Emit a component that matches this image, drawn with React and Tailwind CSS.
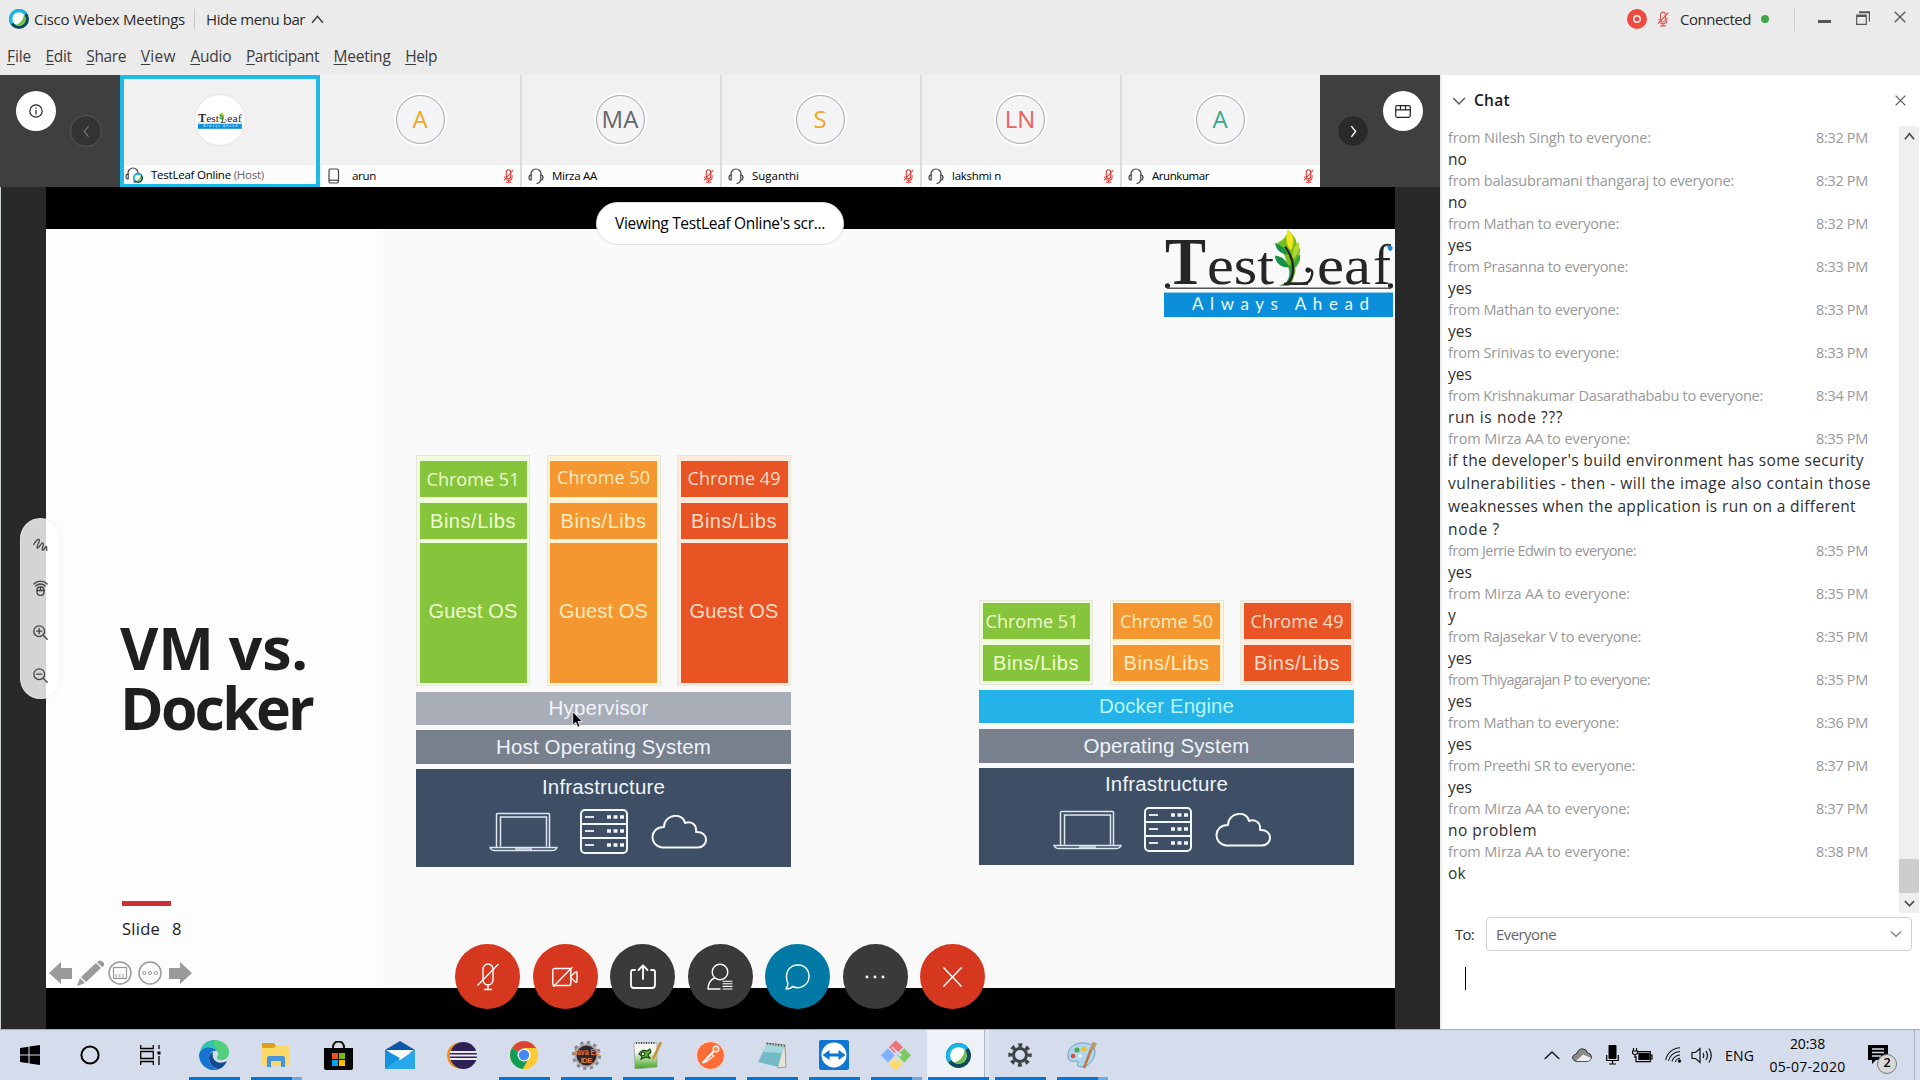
import React, { useLayoutEffect, useRef, useState } from "react";

const UI = "font-['Open_Sans','Noto_Sans',sans-serif]";
const HELV = "font-['Liberation_Sans',Arial,sans-serif]";

/* One line of text whose letter spacing is tuned so that it is `w` pixels wide. */
function Fit({ w, className = "", children }) {
  const ref = useRef(null);
  const [gap, setGap] = useState(0);
  useLayoutEffect(() => {
    const el = ref.current;
    const n = el.textContent.length;
    setGap((w - el.getBoundingClientRect().width) / n);
  }, [w]);
  return (
    <span ref={ref} className={`inline-block whitespace-pre ${className}`} style={{ letterSpacing: gap }}>
      {children}
    </span>
  );
}

/* ---------- shared glyphs ---------- */
function WebexLogo({ size = 20 }) {
  return (
    <svg width={size} height={size} viewBox="0 0 24 24">
      <circle cx="12" cy="12" r="12" fill="#0d4a5c" />
      <path d="M12 0A12 12 0 0 0 2 18.600L12 12 21.500 4.700A12 12 0 0 0 12 0Z" fill="#17b6e4" />
      <circle cx="12" cy="12" r="8" fill="#fff" />
      <path d="M17.800 6.500A8 8 0 0 1 8 18.900C14 17 17.500 12.500 17.800 6.500Z" fill="#6cc04a" />
    </svg>
  );
}
function MicOff({ w = 14, h = 18, color = "#e8534b", sw = 1.3 }) {
  return (
    <svg width={w} height={h} viewBox="0 0 14 18" fill="none" stroke={color} strokeWidth={sw} strokeLinecap="round">
      <rect x="4.200" y="1" width="5.600" height="11.500" rx="2.800" />
      <path d="M7 14.500V17M4 17h6M12.800 2 1.500 14" />
      <path d="M2.500 9.500v1M11.500 8v2.500c0 2-1.500 4-4.500 4-1 0-2-.300-2.800-.900" />
    </svg>
  );
}
function Headset() {
  return (
    <svg width="16" height="17" viewBox="0 0 16 17" fill="none" stroke="#444" strokeWidth="1.200">
      <path d="M3 7.500V6a5 5 0 0 1 10 0v1.500" />
      <path d="M3.200 7v5C1.800 12 1 11 1 9.500S1.800 7 3.200 7ZM12.800 7v5c1.400 0 2.200-1 2.200-2.500S14.200 7 12.800 7Z" />
      <path d="M12.500 12c0 2-1 3-4 3.500" />
    </svg>
  );
}
function Phone() {
  return (
    <svg width="12" height="16" viewBox="0 0 12 16" fill="none" stroke="#444" strokeWidth="1.200">
      <rect x="1" y="1" width="9.500" height="14" rx="1.500" />
      <path d="M1 12.200h9.500" />
    </svg>
  );
}
function Chevron({ dir, size = 12, color = "#555", sw = 1.4 }) {
  const d = { up: "M1 9 6 3l5 6", down: "M1 3.500 6 8.500l5-5", left: "M8 1 4 6l4 5", right: "M4 1l4 5-4 5" }[dir];
  return (
    <svg width={size} height={size} viewBox="0 0 12 12" fill="none" stroke={color} strokeWidth={sw}>
      <path d={d} />
    </svg>
  );
}
function Cross({ size = 12, color = "#555", sw = 1.3 }) {
  return (
    <svg width={size} height={size} viewBox="0 0 12 12" stroke={color} strokeWidth={sw}>
      <path d="M.7.7l10.600 10.600M11.300.7.7 11.300" />
    </svg>
  );
}

function TestLeafLogo({ width, height }) {
  return (
    <svg width={width} height={height} viewBox="0 0 230 90" preserveAspectRatio="none">
      <g fill="#262626" fontFamily="'Liberation Serif', serif">
        <text x="1" y="55" fontSize="69" fontWeight="700" textLength="41" lengthAdjust="spacingAndGlyphs">T</text>
        <text x="43" y="55" fontSize="56" textLength="67" lengthAdjust="spacingAndGlyphs">est</text>
        <text x="153" y="55" fontSize="56" textLength="54" lengthAdjust="spacingAndGlyphs">ea</text>
        <text x="209" y="55" fontSize="59" textLength="18" lengthAdjust="spacingAndGlyphs">f</text>
      </g>
      <path d="M128 56c-2-10-4-20-7-29-3-6-4-10-8-14 7-2 10-8 11-13 5 5 9 9 9 16 3 1 4 5 2 9 2 5 0 11-4 14 2 4-2 8-3 17Z" fill="#78be20" />
      <path d="M111 13c5 2 10 5 13 12-6 0-12-4-13-12ZM111 26c7 1 12 5 14 12-7 1-14-4-14-12Z" fill="#159447" />
      <path d="M124 0c6 5 7 12 3 21-5-5-6-14-3-21Z" fill="#f0e51c" />
      <path d="M135 12c1 8-1 13-6 17-1-7 1-13 6-17Z" fill="#b6d531" />
      <path d="M136 25c1 6-2 10-6 13-1-5 2-10 6-13Z" fill="#38a83c" />
      <path d="M124 36c3 4 2 12-2 18l-7 3h10c5-7 5-16 4-21Z" fill="#269b43" />
      <path d="M121 17c6 8 9 18 8 26-1 6-3 10-6 12h15c6 0 9-4 10-9 1-4-1-6-4-6" fill="none" stroke="#262626" strokeWidth="2.400" />
      <path d="M120 55h24" stroke="#262626" strokeWidth="2.500" />
      <circle cx="144" cy="41" r="2.600" fill="#262626" />
      <circle cx="3.500" cy="57" r="2.600" fill="#262626" />
      <circle cx="226.500" cy="57" r="2.600" fill="#262626" />
      <path d="M221 15.500q5-1 7.500 2 .5 3-2 4-3-.500-2.500-3.500Z" fill="#2388d8" />
      <path d="M3 59.500h224" stroke="#555" strokeWidth="1.500" />
      <rect x="0" y="64" width="229" height="25" fill="#0b8fdb" />
      <text x="28" y="82" fontSize="17" fill="#eefaff" fontFamily="Lato, sans-serif" textLength="177" lengthAdjust="spacing">Always Ahead</text>
    </svg>
  );
}

/* ---------- header ---------- */
const menus = [["File", 24], ["Edit", 26], ["Share", 40], ["View", 35], ["Audio", 41], ["Participant", 73], ["Meeting", 57], ["Help", 32]];

function Header() {
  return (
    <header className="h-[75px] bg-[#ebebeb] text-[#2b2b2b]">
      <div className="flex h-[38px] items-center pl-[9px]">
        <WebexLogo size={20} />
        <Fit w={151} className="ml-[5px] text-[15px]">Cisco Webex Meetings</Fit>
        <span className="ml-[9px] h-[20px] w-px bg-[#c8c8c8]" />
        <Fit w={99} className="ml-[11px] text-[15px]">Hide menu bar</Fit>
        <span className="ml-[6px]"><Chevron dir="up" size={13} color="#333" sw={1.2} /></span>
        <div className="ml-auto flex h-[37px] items-center">
          <svg width="20" height="20" viewBox="0 0 20 20"><circle cx="10" cy="10" r="10" fill="#f04a41" /><circle cx="10" cy="10" r="3.200" fill="none" stroke="#fff" strokeWidth="1.400" /></svg>
          <span className="ml-[10px]"><MicOff w={12} h={16} /></span>
          <Fit w={71} className="ml-[11px] text-[15px]">Connected</Fit>
          <span className="ml-[10px] size-[8px] rounded-full bg-[#3fa648]" />
          <span className="ml-[25px] h-[23px] w-px bg-[#cfcfcf]" />
          <span className="mt-[5px] ml-[23px] h-[3px] w-[13px] bg-[#555]" />
          <svg className="-mt-[2px] ml-[25px]" width="14" height="14" viewBox="0 0 14 14" fill="none" stroke="#555"><path d="M.7 5.500h9.600v7.800H.7z" strokeWidth="1.200" /><path d="M.2 4.500h10.600M3 1.200h11" strokeWidth="2" /><path d="M13.400 1v9.500" strokeWidth="1.200" /></svg>
          <span className="mt-[-5px] mr-[14px] ml-[24px]"><Cross size={12} /></span>
        </div>
      </div>
      <nav className="flex h-[37px] items-center gap-[14.600px] pl-[7px] text-[15.500px] text-[#3c3c3c]">
        {menus.map(([m, w]) => (
          <Fit key={m} w={w}><span className="underline decoration-1 underline-offset-[2px]">{m[0]}</span>{m.slice(1)}</Fit>
        ))}
      </nav>
    </header>
  );
}

/* ---------- participants strip ---------- */
const people = [
  { init: "A", color: "text-[#f0a726]", name: "arun", w: 24, phone: true },
  { init: "MA", color: "text-[#666]", name: "Mirza AA", w: 45 },
  { init: "S", color: "text-[#f0a726]", name: "Suganthi", w: 47 },
  { init: "LN", color: "text-[#ef6158]", name: "lakshmi n", w: 49 },
  { init: "A", color: "text-[#33ab8d]", name: "Arunkumar", w: 57 },
];

function Filmstrip() {
  return (
    <section className="flex h-[112px] bg-[#3f3f3f]">
      <div className="flex w-[120px] pl-[16px]">
        <span className="mt-[16px] flex size-[40px] items-center justify-center rounded-full bg-white">
          <svg width="14" height="14" viewBox="0 0 14 14" fill="none" stroke="#222" strokeWidth="1.200"><circle cx="7" cy="7" r="6.200" /><path d="M7 6v4.500M7 3.500v1.300" /></svg>
        </span>
        <span className="mt-[40px] ml-[14px] flex size-[32px] items-center justify-center rounded-full border border-[#575757] bg-[#333]"><Chevron dir="left" size={13} color="#777" sw={1.1} /></span>
      </div>
      <div className="flex w-[200px] flex-col border-4 border-b-[3px] border-[#1cbbe8] bg-[#f1f1f1]">
        <div className="flex flex-1 items-center justify-center">
          <span className="mt-[-4px] flex size-[52px] items-center justify-center rounded-full border border-[#e4e4e4] bg-white"><TestLeafLogo width={44} height={17} /></span>
        </div>
        <div className="flex h-[19px] items-center bg-[#fcfcfc] pt-[1px] pl-[1px] text-[11.500px] text-black">
          <span className="relative mr-[10px] w-[16px]"><Headset /><span className="absolute top-[6px] left-[8px]"><WebexLogo size={10} /></span></span>
          <Fit w={113}>TestLeaf Online <span className="text-[#666]">(Host)</span></Fit>
        </div>
      </div>
      {people.map((p, i) => (
        <div key={p.name} className={`flex w-[200px] flex-col bg-[#f1f1f1] ${i ? "border-l-2 border-[#dcdcdc]" : "pl-[2px]"}`}>
          <div className="flex h-[90px] items-center justify-center pr-[2px]">
            <span className="mt-[-2px] rounded-full border-2 border-white">
              <span className={`flex size-[49px] items-center justify-center rounded-full border border-[#a5a5a8] bg-[#f4f4f7] text-[24px] ${p.color}`}>{p.init}</span>
            </span>
          </div>
          <div className="flex flex-1 items-center bg-[#fcfcfc] pl-[5px] text-[11.500px] text-black">
            <span className="flex w-[25px] pl-[1px]">{p.phone ? <Phone /> : <Headset />}</span>
            <Fit w={p.w}>{p.name}</Fit>
            <span className="mr-[6px] ml-auto"><MicOff w={11} h={16} color="#e0312c" /></span>
          </div>
        </div>
      ))}
      <div className="flex flex-1 pl-[17px]">
        <span className="mt-[40px] flex size-[32px] items-center justify-center rounded-full border border-[#454545] bg-[#2a2a2a]"><Chevron dir="right" size={13} color="#fff" sw={1.3} /></span>
        <span className="mt-[16px] ml-[14px] flex size-[40px] items-center justify-center rounded-full bg-white">
          <svg width="16" height="13" viewBox="0 0 16 13" fill="none" stroke="#222" strokeWidth="1.200"><rect x=".7" y=".7" width="14.600" height="11.600" rx="1.500" /><path d="M.7 4.800h14.600M5.500.7v4M10.500.7v4" /></svg>
        </span>
      </div>
    </section>
  );
}

/* ---------- slide diagrams ---------- */
function Infra() {
  return (
    <div className="flex items-center pl-[73px]">
      <svg width="69" height="40" viewBox="0 0 69 40" fill="none" stroke="#dfe8f2"><path d="M7.500 35V2.500q0-1 1-1h51q1 0 1 1V35" strokeWidth="1.500" /><path d="M11.500 34.500V5h46v29.500" strokeWidth="1.500" /><path d="M1 35.500h67q-1 3-5 3H6q-4 0-5-3Z" strokeWidth="1.300" /><path d="M26 37h17" strokeWidth="1.500" /></svg>
      <svg className="ml-[22px]" width="48" height="45" viewBox="0 0 48 45" fill="none" stroke="#f3f6fa"><rect x="1" y="1" width="46" height="43" rx="4" strokeWidth="2" /><path d="M1 15h46M1 29h46" strokeWidth="2" />
        {[8, 22, 36].map((y) => <g key={y}><path d={`M5 ${y}h9`} strokeWidth="1.800" /><path d={`M27 ${y}h4M33.500 ${y}h4M40 ${y}h4`} strokeWidth="3.500" /></g>)}
      </svg>
      <svg className="ml-[23px]" width="56" height="34" viewBox="0 0 56 34" fill="none" stroke="#f3f6fa" strokeWidth="2"><path d="M11 32.500C-2 31-2 12 13 12 13 -1 32-3 34 8c6-2 12 1 11 9 13-1 13 15 2 15.500Z" strokeLinejoin="round" /></svg>
    </div>
  );
}

const hues = [
  { bg: "bg-[#86c43b]", frame: "bg-[#effbdc]", text: "text-[#efffd0]" },
  { bg: "bg-[#f59731]", frame: "bg-[#fff4d6]", text: "text-[#ffecc0]" },
  { bg: "bg-[#e85423]", frame: "bg-[#ffeade]", text: "text-[#ffdcc8]" },
];

function Column({ i, guest, offset = "" }) {
  const c = hues[i];
  const name = ["Chrome 51", "Chrome 50", "Chrome 49"][i];
  return (
    <div className={`w-[114px] border border-[#e6e6da] px-[2.500px] ${c.frame} ${c.text} ${guest ? "pt-[5px] pb-[2px]" : "pt-[2px] pb-[3px]"}`}>
      <div className={`flex h-[36px] items-center justify-center ${c.bg} ${offset}`}>
        <Fit w={93} className={`text-[18px] font-medium ${UI}`}>{name}</Fit>
      </div>
      <div className={`mt-[6px] flex h-[36px] items-center justify-center ${c.bg}`}>
        <Fit w={86} className={`text-[20px] ${HELV}`}>Bins/Libs</Fit>
      </div>
      {guest && (
        <div className={`mt-[4px] flex h-[140px] items-center justify-center pb-[4px] ${c.bg}`}>
          <Fit w={89} className={`text-[20px] ${HELV}`}>Guest OS</Fit>
        </div>
      )}
    </div>
  );
}

function Stack({ guest, bars }) {
  return (
    <div className={`w-[375px] text-[#eef4fb] ${HELV}`}>
      <div className={`flex justify-between ${guest ? "mb-[6px]" : "mb-[5px]"}`}>
        <Column i={0} guest={guest} offset={guest ? "pt-[1px]" : "pt-[1px] pr-[8px]"} />
        <Column i={1} guest={guest} offset={guest ? "pb-[4px]" : ""} />
        <Column i={2} guest={guest} offset={guest ? "pb-[2px]" : ""} />
      </div>
      {bars.map((b) => (
        <div key={b.label} className={`flex items-center justify-center ${b.bg} ${b.size}`}>
          <Fit w={b.w} className={`text-[20.500px] ${b.text || ""}`}>{b.label}</Fit>
        </div>
      ))}
      <div className={`bg-[#3e4e64] ${guest ? "h-[98px] pt-[2px]" : "h-[97px]"}`}>
        <div className="flex h-[32px] items-center justify-center"><Fit w={123} className="text-[20.500px]">Infrastructure</Fit></div>
        <div className={guest ? "mt-[6px]" : "mt-[7px] ml-[1px]"}><Infra /></div>
      </div>
    </div>
  );
}

function SlideNav() {
  const g = "#9a9a9a";
  return (
    <div className="flex items-center">
      <svg width="23" height="24" viewBox="0 0 23 24" fill={g}><path d="M0 12 12 1v6h11v11H12v5Z" /></svg>
      <svg className="ml-[5px]" width="27" height="26" viewBox="0 0 27 26" fill={g}><path d="M0 26 3 18l5 5ZM4 17 19 3l5 5L9 22ZM20 2q3-3 6 0t-1 5Z" /></svg>
      <svg className="ml-[4px]" width="24" height="24" viewBox="0 0 24 24" fill="none" stroke={g}><circle cx="12" cy="12" r="11" strokeWidth="1.500" /><rect x="5.500" y="6.500" width="13" height="11" strokeWidth="1.200" /><path d="M7 14h10M7 16h10" strokeDasharray="2 1.500" /></svg>
      <svg className="ml-[6px]" width="24" height="24" viewBox="0 0 24 24" fill="none" stroke={g}><circle cx="12" cy="12" r="11" strokeWidth="1.500" /><circle cx="6.300" cy="12" r="1.600" /><circle cx="12" cy="12" r="1.600" /><circle cx="17.700" cy="12" r="1.600" /></svg>
      <svg className="ml-[7px]" width="23" height="24" viewBox="0 0 23 24" fill={g}><path d="M23 12 11 1v6H0v11h11v5Z" /></svg>
    </div>
  );
}

function Slide() {
  return (
    <div className="flex h-[759px] overflow-hidden bg-[#f9f9f9]">
      <div className="flex w-[337px] flex-col bg-[#fdfdfd] pt-[388px]">
        <h1 className="ml-[74px] flex flex-col items-start text-[59px] leading-[60px] font-bold text-[#1f1f1f]">
          <Fit w={188}>VM vs.</Fit>
          <Fit w={192}>Docker</Fit>
        </h1>
        <div className="mt-[164px] ml-[76px] h-[5px] w-[49px] bg-[#cc2f35]" />
        <div className="mt-[11px] ml-[76px] flex h-[25px] items-center gap-[12px] text-[16.500px] font-medium text-[#222]"><Fit w={38}>Slide</Fit><span>8</span></div>
        <div className="mt-[18px] ml-[3px]"><SlideNav /></div>
      </div>
      <div className="relative flex flex-1 items-start pl-[33px]">
        <div className="absolute top-[1px] right-[1px]"><TestLeafLogo width={230} height={88} /></div>
        <div className="relative mt-[226px]">
          <Stack guest bars={[{ label: "Hypervisor", w: 100, bg: "bg-[#a9adb7]", size: "h-[33px] mb-[5px] pr-[10px]" }, { label: "Host Operating System", w: 215, bg: "bg-[#78808e]", size: "h-[34px] mb-[5px]" }]} />
          <svg className="absolute top-[256px] left-[156px]" width="11" height="17" viewBox="0 0 11 17"><path d="M.7.7v13.500l3-3 2.200 5 2.200-1-2.200-4.700h4.300Z" fill="#000" stroke="#fff" strokeWidth=".8" /></svg>
        </div>
        <div className="mt-[371px] ml-[188px]">
          <Stack bars={[{ label: "Docker Engine", w: 135, bg: "bg-[#24b3e8]", text: "text-[#b8f6ff]", size: "h-[33px] mb-[6px]" }, { label: "Operating System", w: 166, bg: "bg-[#78808e]", size: "h-[34px] mb-[5px]" }]} />
        </div>
      </div>
    </div>
  );
}

/* ---------- overlays on the shared screen ---------- */
function ToolPill() {
  const p = { fill: "none", stroke: "#444", strokeWidth: 1.3, strokeLinecap: "round" };
  return (
    <div className="absolute top-[331px] left-[20px] flex h-[181px] w-[41px] flex-col items-center justify-between rounded-full border border-[#eee]/70 bg-white/80 pt-[19px] pb-[15px]">
      <svg width="15" height="14" viewBox="0 0 15 14" {...p}><path d="M.7 6.500C2.500 3.500 5 .8 6.300 1.500S3 9 4.200 10 8.500 4.300 10 5s-1.800 6-.5 7 2.500-4 3.800-3.500-.8 3 .7 4" /></svg>
      <svg width="15" height="16" viewBox="0 0 15 16" {...p}><rect x="4" y="7" width="7" height="8.300" rx="3" /><path d="M4 10.500h7M7.500 7v3.500M.8 4C4.500.2 10.500.2 14.200 4M2.800 6c2.600-2.700 6.800-2.700 9.400 0" /></svg>
      <svg width="15" height="15" viewBox="0 0 15 15" {...p}><circle cx="6.200" cy="6.200" r="5.400" /><path d="m10.200 10.200 4 4M3.700 6.200h5M6.200 3.700v5" /></svg>
      <svg width="15" height="15" viewBox="0 0 15 15" {...p}><circle cx="6.200" cy="6.200" r="5.400" /><path d="m10.200 10.200 4 4M3.700 6.200h5" /></svg>
    </div>
  );
}

function Controls() {
  const s = { fill: "none", stroke: "#fff", strokeWidth: 1.4, strokeLinecap: "round", strokeLinejoin: "round" };
  const items = [
    ["bg-[#d5381e]", <svg width="22" height="28" viewBox="0 0 22 28" {...s}><rect x="6" y="1" width="10" height="21" rx="5" /><path d="M11 22v4M7.500 26.500h7M21 1.500 1 22" /></svg>],
    ["bg-[#d5381e]", <svg width="26" height="20" viewBox="0 0 26 20" {...s}><rect x=".8" y="1.500" width="18" height="17" rx="1.500" /><path d="m19 9 4.500-4q1.300-.8 1.500.5v9q-.2 1.300-1.500.5L19 11M20 .5 1.500 19.500" /></svg>],
    ["bg-[#3a3a3a]", <svg width="26" height="25" viewBox="0 0 26 25" {...s} strokeWidth="1.800"><path d="M5 6H3Q1 6 1 8v13q0 3 3 3h18q3 0 3-3V8q0-2-2-2h-2" /><path d="M13 15V2M8.500 6 13 1.500 17.500 6" /></svg>],
    ["bg-[#3a3a3a]", <svg width="26" height="27" viewBox="0 0 26 27" {...s}><circle cx="13" cy="9" r="7.800" /><path d="M7.500 15C3 17 1.300 20 1 26h12" /><path d="M16 18.200h9M16 20.800h9M16 23.400h9M16 26h9" strokeWidth="1.100" /></svg>],
    ["bg-[#0079a4]", <svg width="25" height="26" viewBox="0 0 25 26" {...s}><path d="M1 25c1.500-2 2-4 1.800-6C-1 9 4 1 13 1s11.500 8 11 12c-.6 8-9 13-16.500 9.500C5.500 25 3.500 25 1 25Z" /></svg>],
    ["bg-[#3a3a3a]", <svg width="20" height="4" viewBox="0 0 20 4" fill="#fff"><circle cx="2" cy="2" r="1.400" /><circle cx="10" cy="2" r="1.400" /><circle cx="18" cy="2" r="1.400" /></svg>],
    ["bg-[#d5381e]", <svg width="19" height="20" viewBox="0 0 19 20" {...s}><path d="m.7.7 17.600 18.600M18.300.7.7 19.300" /></svg>],
  ];
  return (
    <div className="absolute top-[757px] left-[455px] flex gap-[12.500px]">
      {items.map(([bg, icon], i) => <span key={i} className={`flex size-[65px] items-center justify-center rounded-full ${bg}`}>{icon}</span>)}
    </div>
  );
}

function Stage() {
  return (
    <section className="relative flex h-[842px] bg-[#292929]">
      <div className="w-[46px] border-l border-[#c8d0d0]" />
      <div className="w-[1349px] bg-black pt-[42px]"><Slide /></div>
      <div className="flex-1" />
      <div className="absolute top-[15px] left-[596px] flex h-[43px] w-[248px] items-center justify-center rounded-full border border-[#ddd] bg-white pt-[1px] text-[15.500px] text-black"><Fit w={210}>Viewing TestLeaf Online's scr...</Fit></div>
      <ToolPill />
      <Controls />
    </section>
  );
}

/* ---------- chat ---------- */
const chat = [
  ["Nilesh Singh", 203, "8:32 PM", ["no"]],
  ["balasubramani thangaraj", 286, "8:32 PM", ["no"]],
  ["Mathan", 171, "8:32 PM", ["yes"]],
  ["Prasanna", 180, "8:33 PM", ["yes"]],
  ["Mathan", 171, "8:33 PM", ["yes"]],
  ["Srinivas", 171, "8:33 PM", ["yes"]],
  ["Krishnakumar Dasarathababu", 315, "8:34 PM", ["run is node ???"]],
  ["Mirza AA", 182, "8:35 PM", ["if the developer's build environment has some security", "vulnerabilities - then - will the image also contain those", "weaknesses when the application is run on a different", "node ?"]],
  ["Jerrie Edwin", 188, "8:35 PM", ["yes"]],
  ["Mirza AA", 182, "8:35 PM", ["y"]],
  ["Rajasekar V", 193, "8:35 PM", ["yes"]],
  ["Thiyagarajan P", 202, "8:35 PM", ["yes"]],
  ["Mathan", 171, "8:36 PM", ["yes"]],
  ["Preethi SR", 187, "8:37 PM", ["yes"]],
  ["Mirza AA", 182, "8:37 PM", ["no problem"]],
  ["Mirza AA", 182, "8:38 PM", ["ok"]],
];
const lineWidths = {
  "run is node ???": 115,
  "if the developer's build environment has some security": 416,
  "vulnerabilities - then - will the image also contain those": 423,
  "weaknesses when the application is run on a different": 408,
  "node ?": 52, "no problem": 89, no: 19, yes: 24, ok: 18, y: 8,
};

function Chat() {
  return (
    <aside className="flex w-[480px] flex-col border-l-2 border-[#ededed] bg-white">
      <div className="flex h-[51px] items-center pr-[14px] pl-[10px]">
        <Chevron dir="down" size={14} color="#555" sw={1.2} />
        <Fit w={36} className="ml-[8px] text-[15.500px] font-semibold text-[#1b1b1b]">Chat</Fit>
        <span className="ml-auto"><Cross size={11} /></span>
      </div>
      <div className="flex h-[787px]">
        <div className="flex-1 pt-[2px] pl-[6px]">
          {chat.map(([who, w, time, lines], i) => (
            <div key={i}>
              <div className="flex h-[20px] items-center justify-between pr-[31px] text-[14.500px] text-[#999]">
                <Fit w={w}>{`from ${who} to everyone:`}</Fit>
                <Fit w={52}>{time}</Fit>
              </div>
              {lines.map((l) => <div key={l} className="flex h-[23px] items-center text-[15.500px] text-[#2f2f2f]"><Fit w={lineWidths[l]}>{l}</Fit></div>)}
            </div>
          ))}
        </div>
        <div className="mr-px flex w-[20px] flex-col items-center bg-[#efefef]">
          <span className="mt-[5px]"><Chevron dir="up" size={11} color="#505050" sw={2} /></span>
          <span className="mt-auto h-[34px] w-full bg-[#cdcdcd]" />
          <span className="flex h-[20px] items-center"><Chevron dir="down" size={11} color="#505050" sw={2} /></span>
        </div>
      </div>
      <div className="mt-[4px] flex items-center pl-[13px] text-[15px] text-[#333]">
        <Fit w={19}>To:</Fit>
        <div className="ml-[12px] flex h-[34px] w-[426px] items-center justify-between rounded-[4px] border border-[#d0d0d0] pr-[9px] pl-[9px] text-[#666]"><Fit w={60}>Everyone</Fit><Chevron dir="down" size={12} color="#777" sw={1.2} /></div>
      </div>
      <span className="mt-[16px] ml-[23px] h-[23px] w-px bg-black" />
    </aside>
  );
}

/* ---------- taskbar ---------- */
const apps = [
  { bar: "w-[51px]", icon: <svg width="30" height="30" viewBox="0 0 30 30"><path d="M1 14C1 5 8 0 15 0c8 0 15 5 15 12 0 5-4 8-8 8-3 0-4-1-4-2 0-2 2-2 1-5-2-6-13-8-18 1Z" fill="#35c1b0" /><path d="M15 0c8 0 15 5 15 12 0 5-4 8-8 8-3 0-4-1-4-2 2-4 1-9-3-12Z" fill="#5bd36b" opacity=".75" /><path d="M0 15c1-8 13-10 18-4-5-1-8 3-8 7 0 6 5 11 11 12C10 33 0 25 0 15Z" fill="#1673cf" /><path d="M10 18c0-3 1-5 4-6-2 7 4 14 14 9-2 4-5 8-9 8-5-1-9-6-9-11Z" fill="#114a93" /></svg> },
  { bar: "w-[51px]", split: true, icon: <svg width="28" height="24" viewBox="0 0 28 24"><path d="M0 1q0-1 1-1h10l3 3h12q1 0 1 1v18H0Z" fill="#f6c445" /><path d="M0 0h12l2 3-3 2H0Z" fill="#dba01c" /><path d="M0 5h12l2-2h13v20H0Z" fill="#fbd868" /><path d="M5 24V15q0-2 2-2h14q2 0 2 2v9h-4v-6H9v6Z" fill="#4796dc" /></svg> },
  { icon: <svg width="29" height="29" viewBox="0 0 29 29"><path d="M9 10V6a5.500 5.500 0 0 1 11 0v4" fill="none" stroke="#111" strokeWidth="2" /><path d="M0 7h29v20q0 2-2 2H2q-2 0-2-2Z" fill="#050505" /><path d="M8 12h6v6H8z" fill="#f25022" /><path d="M15 12h6v6h-6z" fill="#7fba00" /><path d="M8 19h6v6H8z" fill="#00a4ef" /><path d="M15 19h6v6h-6z" fill="#ffb900" /></svg> },
  { icon: <svg width="30" height="28" viewBox="0 0 30 28"><path d="M0 9 15 0l15 9v3H0Z" fill="#0a57a5" /><path d="M0 9v19h30V9L15 19Z" fill="#28a8ea" /><path d="M1 9h28L15 19Z" fill="#f8f8f8" /><path d="M0 28 15 17 0 9Z" fill="#1490df" /></svg> },
  { icon: <svg width="30" height="27" viewBox="0 0 30 27"><ellipse cx="13" cy="13.500" rx="13" ry="13" fill="#f28c1c" /><circle cx="16.500" cy="13.500" r="13.500" fill="#2c2255" /><path d="M3 10h27M3 13.500h27M3 17h27" stroke="#eceaf4" strokeWidth="1.900" /></svg> },
  { bar: "w-[51px]", icon: <svg width="28" height="28" viewBox="0 0 28 28"><circle cx="14" cy="14" r="14" fill="#fbc92f" /><path d="M14 14 1.900 7A14 14 0 0 1 26.100 7Z" fill="#db4437" /><path d="M1.900 7A14 14 0 0 0 13 28l6-11-5-3Z" fill="#109d58" /><path d="M26.100 7H14v7l5 3-6 11A14 14 0 0 0 26.100 7Z" fill="#fdca35" /><circle cx="14" cy="14" r="6.500" fill="#fff" /><circle cx="14" cy="14" r="5.200" fill="#4789f4" /></svg> },
  { bar: "w-[51px]", icon: <svg width="29" height="29" viewBox="0 0 29 29"><circle cx="14.500" cy="14.500" r="12.800" fill="none" stroke="#84858c" strokeWidth="3.400" strokeDasharray="3.200 3.500" /><circle cx="14.500" cy="14.500" r="11" fill="#2c2730" stroke="#aaa" strokeWidth="2" /><text x="1" y="13.500" fontSize="8.500" fontWeight="700" fill="#e47b2c" fontFamily="Liberation Sans, sans-serif" textLength="27" lengthAdjust="spacingAndGlyphs">Java EE</text><text x="8.500" y="21.500" fontSize="8" fontWeight="700" fill="#e47b2c" fontFamily="Liberation Sans, sans-serif" textLength="12">IDE</text></svg> },
  { bar: "w-[51px]", icon: <svg width="30" height="28" viewBox="0 0 30 28"><defs><linearGradient id="sheet" x1="0" y1="0" x2="0" y2="1"><stop offset=".35" stopColor="#f4f6f0" /><stop offset="1" stopColor="#3fa51a" /></linearGradient></defs><path d="M1 2h23v24L2 28Z" fill="url(#sheet)" stroke="#999" strokeWidth=".7" /><path d="M3 2h20" stroke="#444" strokeDasharray="1 1.500" strokeWidth="2" /><path d="M6 13q3-5 8-3l3-2 1 3-3 3 2 3-4-1-5 2 1-3Z" fill="#5eb62b" stroke="#173d16" strokeWidth="1.100" /><circle cx="10" cy="13" r="1.800" fill="#e2f3c8" stroke="#173d16" /><path d="m28 1-8 17" stroke="#c99030" strokeWidth="2.600" /></svg> },
  { bar: "w-[51px]", icon: <svg width="29" height="29" viewBox="0 0 29 29"><circle cx="14.500" cy="14.500" r="14" fill="#ff6c37" stroke="#ffe1d5" /><path d="m7 22 9-10 3-3" stroke="#fff" strokeWidth="2" /><path d="m7 21 8-8 3 2-8 6Z" fill="none" stroke="#fff" strokeWidth="1.100" /><circle cx="20" cy="8" r="2.800" fill="#ff8a5e" stroke="#fff" strokeWidth="1.200" /></svg> },
  { bar: "w-[51px]", icon: <svg width="29" height="27" viewBox="0 0 29 27"><path d="m8 1 19 2 1 22-8 1Z" fill="#e6e3d4" stroke="#8b8570" strokeWidth=".8" /><path d="M9 2 26 4 20 25 0 20Z" fill="#75b9c5" /><path d="M9 2 26 4l-2 7L5 10Z" fill="#a5d8dd" /><path d="M9 1.500 27 4" stroke="#535d60" strokeWidth="2" strokeDasharray="1.200 1.600" /></svg> },
  { bar: "w-[51px]", icon: <svg width="30" height="30" viewBox="0 0 30 30"><rect width="30" height="30" rx="2" fill="#0d77d1" /><circle cx="15" cy="15" r="12.500" fill="#fff" /><path d="m3.500 15 7-5v3.500h9V10l7 5-7 5v-3.500h-9V20Z" fill="#0d77d1" /></svg> },
  { bar: "w-[51px]", split: true, icon: <svg width="30" height="30" viewBox="0 0 30 30"><g transform="rotate(45 15 15)"><rect x="4.500" y="4.500" width="10" height="10" fill="#f07177" /><rect x="16" y="4.500" width="10" height="10" fill="#7ccb5e" /><rect x="4.500" y="16" width="10" height="10" fill="#7eb0ff" /><rect x="16" y="16" width="10" height="10" fill="#ffdb6b" /></g><path d="m11 7 8 8M15 11v9" stroke="#d5dcec" strokeWidth="1.600" /><circle cx="15" cy="20" r="1.800" fill="#d5dcec" /><circle cx="19" cy="15" r="1.800" fill="#d5dcec" /></svg> },
  { bar: "w-[61px]", active: true, icon: <WebexLogo size={25} /> },
  { bar: "w-[51px]", icon: <svg width="24" height="24" viewBox="0 0 24 24" fill="none" stroke="#3f434b"><circle cx="12" cy="12" r="6.500" strokeWidth="3" /><circle cx="12" cy="12" r="9.700" strokeWidth="4" strokeDasharray="3.800 3.818" strokeDashoffset="1.900" /></svg> },
  { bar: "w-[51px]", split: true, icon: <svg width="31" height="28" viewBox="0 0 31 28"><path d="M1 16C0 7 8 1 17 2c9 0 13 7 10 14-3 8-12 12-16 9-2-2 2-4-1-5-3 0-8 2-9-4Z" fill="#aed6ed" stroke="#6b9fbd" /><circle cx="6" cy="15" r="2.300" fill="#dc4a42" /><circle cx="10" cy="9" r="2.500" fill="#48ac48" /><circle cx="17" cy="8" r="2.500" fill="#f3ba2b" /><circle cx="13" cy="15" r="1.800" fill="#f5f9fc" /><path d="m17 27 8-21" stroke="#bf7840" strokeWidth="2.600" /><path d="m23 9 2-8 5 1-3 7Z" fill="#b79a70" /></svg> },
];

function Taskbar() {
  return (
    <footer className="flex h-[51px] border-t border-[#a9adb3] bg-[#d5dded] text-black">
      <div className="flex w-[183px] items-center">
        <span className="flex w-[60px] justify-center"><svg width="20" height="20" viewBox="0 0 20 20"><path d="M0 3 8.500 1.700v7.800H0ZM9.500 1.500 20 0v9.500H9.500ZM0 10.500h8.500v7.800L0 17ZM9.500 10.500H20V20L9.500 18.500Z" /></svg></span>
        <span className="flex w-[60px] justify-center"><svg width="20" height="20" viewBox="0 0 20 20"><circle cx="10" cy="10" r="8.600" fill="none" stroke="#000" strokeWidth="2" /></svg></span>
        <span className="flex w-[60px] justify-center"><svg width="21" height="20" viewBox="0 0 21 20" fill="none" stroke="#000" strokeWidth="1.300"><path d="M.7 0v3.500h12.600V0M.7 20v-3.500h12.600V20M.7 6.500h12.600v7H.7ZM19 0v4M19 11v9" /><path d="M17.500 8h3" strokeWidth="3" /></svg></span>
      </div>
      {apps.map((a, i) => (
        <div key={i} className={`relative flex w-[62px] shrink-0 items-center justify-center ${a.active ? "bg-[#eef1f8]" : ""}`}>
          {a.icon}
          {a.active && <span className="absolute inset-y-0 right-0 w-[5px] border-l border-[#aeb7c7] bg-[#dfe5f1]" />}
          {a.bar && <span className={`absolute bottom-0 flex h-[3px] justify-end bg-[#0b74d0] ${a.bar}`}>{a.split && <span className="w-[10px] bg-[#6ea9e2]" />}</span>}
        </div>
      ))}
      <div className="ml-auto flex items-center">
        <svg width="16" height="9" viewBox="0 0 16 9" fill="none" stroke="#111" strokeWidth="1.300"><path d="m.7 8 7.300-7 7.300 7" /></svg>
        <svg className="ml-[12px]" width="20" height="14" viewBox="0 0 20 14"><path d="M4 13.300Q0 12 .8 8.500 2 6 4.500 6 6 1 10.500.8q4 .2 5 4 4 .7 4 4.700-.5 3-3.500 3.800Z" fill="#8b8b8b" stroke="#222" strokeWidth=".9" /><path d="m4 13 7-6.500 8 3.500q-1 3-3.500 3Z" fill="#eee" /></svg>
        <svg className="ml-[14px]" width="13" height="20" viewBox="0 0 13 20"><rect x="2.500" width="8" height="14" rx="1" /><path d="M.7 10v5.500h11.600V10M6.500 15.500V19M3 19h7" fill="none" stroke="#000" strokeWidth="1.200" /></svg>
        <svg className="ml-[13px]" width="21" height="15" viewBox="0 0 21 15" fill="none" stroke="#000" strokeWidth="1.200"><path d="M6 3.600h12.300v10H4V8M18.300 7H20v4h-1.700" /><path d="M7 5.500h10v6H7z" fill="#000" /><path d="M1.500 0v3M4.500 0v3M.5 3h5v2.500q-2.500 2-5 0ZM3 6v4" /></svg>
        <svg className="ml-[12px]" width="17" height="16" viewBox="0 0 17 16" fill="none" stroke="#111" strokeWidth="1.100"><path d="M.7 13C2 6 8 1 15 .8M3.500 14C4.500 9 9 4.500 15 4.500M7 14.500c.5-3 4-6.500 8-6.500M10.500 15c.3-2 2.500-3.700 4.500-3.700" /><circle cx="14.500" cy="14" r="1.100" fill="#000" /></svg>
        <svg className="ml-[9px]" width="22" height="17" viewBox="0 0 22 17" fill="none" stroke="#111" strokeWidth="1.200"><path d="M1 5.500h3.500L9 1.500v14l-4.500-4H1ZM12 6q1.500 2.500 0 5M15 4q3 4.500 0 9M18 1.500q4.500 7 0 14" /></svg>
        <Fit w={29} className="ml-[12px] text-[14px]">ENG</Fit>
        <div className="ml-[15px] flex w-[77px] flex-col items-center text-[14px] leading-[23px]"><Fit w={35}>20:38</Fit><Fit w={76}>05-07-2020</Fit></div>
        <div className="relative mt-[-1px] mr-[26px] ml-[22px]">
          <svg width="20" height="20" viewBox="0 0 20 20"><path d="M0 0h20v15H8l-4 4v-4H0Z" /><path d="M4 4h12M4 7.500h12M4 11h9" stroke="#d5dded" strokeWidth="1.300" /></svg>
          <span className="absolute top-[9px] left-[9px] flex size-[20px] items-center justify-center rounded-full border border-[#777] bg-[#d9d9d9] text-[12.500px] font-semibold">2</span>
        </div>
        <span className="h-[50px] w-[6px] border-l border-[#aab3c3]" />
      </div>
    </footer>
  );
}

export default function App() {
  return (
    <div className={`flex h-[1080px] w-[1920px] flex-col overflow-hidden ${UI}`}>
      <Header />
      <main className="flex h-[954px]">
        <div className="w-[1440px]">
          <Filmstrip />
          <Stage />
        </div>
        <Chat />
      </main>
      <Taskbar />
    </div>
  );
}
